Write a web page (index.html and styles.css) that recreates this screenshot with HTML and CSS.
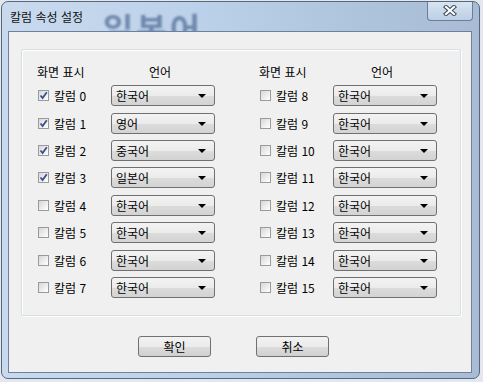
FILE: index.html
```html
<!DOCTYPE html>
<html lang="ko">
<head>
<meta charset="UTF-8" />
<title>칼럼 속성 설정</title>
<link rel="stylesheet" href="styles.css">
</head>
<body>

<div class="window">
  <div class="behind-glass">일본어</div>
  <div class="title-bar">
    <span class="title">칼럼 속성 설정</span>
    <button class="close-btn" title="닫기">
      <svg width="14" height="11" viewBox="0 0 14 11">
        <path d="M3 2 L11 9 M11 2 L3 9" stroke="#3d4a5c" stroke-width="4.2" stroke-linecap="square" fill="none"/>
        <path d="M3 2 L11 9 M11 2 L3 9" stroke="#fff" stroke-width="2.2" stroke-linecap="square" fill="none"/>
      </svg>
    </button>
  </div>

  <div class="client">
    <div class="group">
      <div class="col-block" id="block-left"></div>
      <div class="col-block" id="block-right"></div>
    </div>
    <div class="buttons">
      <button class="push-btn">확인</button>
      <button class="push-btn">취소</button>
    </div>
  </div>
</div>

<script>
// language per column (0..15)
const langs = ['한국어', '영어', '중국어', '일본어'];
const checkSvg = '<svg width="9" height="9" viewBox="0 0 9 9"><path d="M1.5 4.5 L3.6 7 L7.8 1.2" stroke="#3a4f8a" stroke-width="1.8" fill="none"/></svg>';

function renderBlock(el, start) {
  let html = '<div class="head"><span class="head-show">화면 표시</span><span class="head-lang">언어</span></div>';
  for (let i = start; i < start + 8; i++) {
    const checked = i < 4;
    const lang = i < 4 ? langs[i] : '한국어';
    html += `
      <div class="row">
        <label class="chk-label">
          <span class="chk">${checked ? checkSvg : ''}</span>칼럼 ${i}
        </label>
        <div class="combo"><span>${lang}</span><i class="arrow"></i></div>
      </div>`;
  }
  el.innerHTML = html;
}

renderBlock(document.getElementById('block-left'), 0);
renderBlock(document.getElementById('block-right'), 8);
</script>

</body>
</html>
```

FILE: styles.css
```css
body {
  margin: 0;
  padding: 0;
  background: #e4e8ee;
  font-family: "Noto Sans CJK KR", "Noto Sans", sans-serif;
  font-size: 12px;
  color: #000;
}
.window {
  position: relative;
  margin: 1px 0 0 1px;
  width: 479px;
  height: 378px;
  box-sizing: border-box;
  border: 1px solid #56677e;
  border-radius: 7px;
  background: linear-gradient(90deg, #c9daee 0%, #bcd1ea 40%, #aec3dc 75%, #a8bcd6 100%);
  padding: 0 7px 7px 6px;
  overflow: hidden;
}
.behind-glass {
  position: absolute;
  left: 101px;
  top: 6px;
  font-size: 33px;
  line-height: 40px;
  font-weight: bold;
  color: #2f4d7c;
  opacity: 0.55;
  filter: blur(1.3px);
  letter-spacing: 3px;
}
.title-bar {
  position: relative;
  height: 29px;
  display: flex;
  align-items: center;
}
.title {
  padding-left: 2px;
  margin-top: -1px;
  color: #111;
}
.close-btn {
  position: absolute;
  top: -1px;
  right: -1px;
  width: 46px;
  height: 20px;
  padding: 0;
  border: 1px solid #6c7d95;
  border-top: none;
  border-radius: 0 0 4px 4px;
  background: linear-gradient(#d9e5f2, #bccfe4);
  display: flex;
  align-items: center;
  justify-content: center;
}
.client {
  position: relative;
  height: 342px;
  box-sizing: border-box;
  border: 1px solid #6f819a;
  background: #f0f0f0;
  padding: 17px 10px 0 12px;
}
.group {
  height: 267px;
  box-sizing: border-box;
  border: 1px solid #d5dfe5;
  box-shadow: inset 1px 1px 0 #fff, 1px 1px 0 #fff;
  border-radius: 2px;
  padding: 14px 0 0 15px;
  display: flex;
  gap: 44px;
}
.col-block {
  width: 178px;
}
.head {
  display: flex;
  height: 18px;
  line-height: 16px;
}
.head-show {
  width: 74px;
}
.head-lang {
  width: 104px;
  text-align: center;
  padding-right: 6px;
  box-sizing: border-box;
}
.row {
  display: flex;
  align-items: center;
  height: 27.4px;
}
.chk-label {
  width: 74px;
  display: flex;
  align-items: center;
  gap: 5px;
}
.chk {
  width: 11px;
  height: 11px;
  margin-left: 1px;
  box-sizing: border-box;
  border: 1px solid #9a9a9a;
  background: linear-gradient(135deg, #d6d6d6, #f4f4f4 70%, #fff);
  display: flex;
  align-items: center;
  justify-content: center;
}
.combo {
  position: relative;
  width: 104px;
  height: 21px;
  box-sizing: border-box;
  border: 1px solid #707070;
  border-radius: 3px;
  background: linear-gradient(#f3f3f3 0%, #ebebeb 50%, #dcdcdc 51%, #d3d3d3 100%);
  display: flex;
  align-items: center;
  padding-left: 4px;
}
.arrow {
  position: absolute;
  right: 8px;
  top: 8px;
  width: 0;
  height: 0;
  border-left: 4px solid transparent;
  border-right: 4px solid transparent;
  border-top: 4px solid #000;
}
.buttons {
  display: flex;
  gap: 45px;
  padding: 20px 0 0 117px;
}
.push-btn {
  width: 73px;
  height: 21px;
  padding: 0;
  border: 1px solid #707070;
  border-radius: 3px;
  background: linear-gradient(#f2f2f2 0%, #ebebeb 50%, #dddddd 51%, #cfcfcf 100%);
  font-family: inherit;
  font-size: 12px;
  color: #000;
}
```
